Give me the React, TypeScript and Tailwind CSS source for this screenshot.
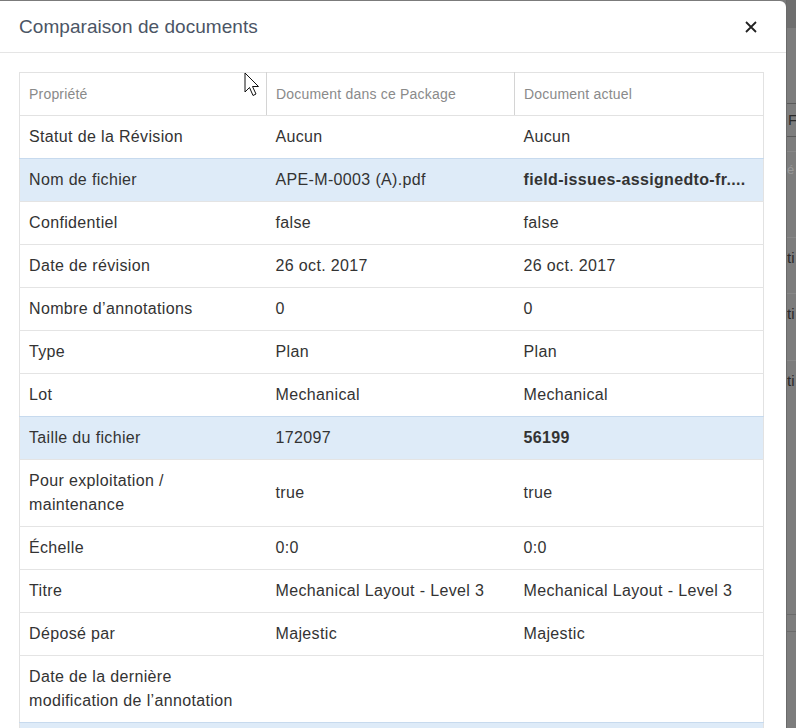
import React from "react";

type Row = { label: React.ReactNode; a: string; b: string; hl?: boolean; bold?: boolean };

const rows: Row[] = [
  { label: "Statut de la Révision", a: "Aucun", b: "Aucun" },
  { label: "Nom de fichier", a: "APE-M-0003 (A).pdf", b: "field-issues-assignedto-fr....", hl: true, bold: true },
  { label: "Confidentiel", a: "false", b: "false" },
  { label: "Date de révision", a: "26 oct. 2017", b: "26 oct. 2017" },
  { label: "Nombre d’annotations", a: "0", b: "0" },
  { label: "Type", a: "Plan", b: "Plan" },
  { label: "Lot", a: "Mechanical", b: "Mechanical" },
  { label: "Taille du fichier", a: "172097", b: "56199", hl: true, bold: true },
  { label: (<>Pour exploitation /<br />maintenance</>), a: "true", b: "true" },
  { label: "Échelle", a: "0:0", b: "0:0" },
  { label: "Titre", a: "Mechanical Layout - Level 3", b: "Mechanical Layout - Level 3" },
  { label: "Déposé par", a: "Majestic", b: "Majestic" },
  { label: (<>Date de la dernière<br />modification de l’annotation</>), a: "", b: "" },
  { label: "\u00a0", a: "", b: "", hl: true },
];

export default function App() {
  return (
    <div
      className="relative w-[796px] h-[728px] overflow-hidden bg-[#7b7b7b] flex"
      style={{ fontFamily: '"Liberation Sans", Arial, sans-serif' }}
    >
      <div className="w-[786px] mt-px bg-white rounded-tr-[6px] shrink-0 flex flex-col">
        <div className="h-[52px] border-b border-[#e5e5e5] flex items-center justify-between pl-[19px] pr-[28px] shrink-0">
          <span className="text-[19px] tracking-[0.05px] text-[#4b5565] pt-[1px]">Comparaison de documents</span>
          <svg width="14" height="14" viewBox="0 0 14 14" className="mt-[1px]">
            <path d="M2 2 L12 12 M12 2 L2 12" stroke="#222" strokeWidth="1.8" />
          </svg>
        </div>
        <div className="pt-[19px] pl-[19px] pr-[23px] overflow-hidden">
          <table className="w-[744px] table-fixed border-collapse border border-[#e2e2e2]">
            <colgroup>
              <col className="w-[247px]" />
              <col className="w-[248px]" />
              <col className="w-[249px]" />
            </colgroup>
            <thead>
              <tr className="h-[43px]">
                <th className="text-left font-normal text-[14px] tracking-[0.2px] text-[#8a8a8a] px-[9px] pt-[1px] border-r border-[#d4d4d4] border-b border-b-[#e2e2e2]">Propriété</th>
                <th className="text-left font-normal text-[14px] tracking-[0.2px] text-[#8a8a8a] px-[9px] pt-[1px] border-r border-[#d4d4d4] border-b border-b-[#e2e2e2]">Document dans ce Package</th>
                <th className="text-left font-normal text-[14px] tracking-[0.2px] text-[#8a8a8a] px-[9px] pt-[1px] border-b border-[#e2e2e2]">Document actuel</th>
              </tr>
            </thead>
            <tbody>
              {rows.map((r, i) => (
                <tr
                  key={i}
                  className={
                    r.hl
                      ? "bg-[#deebf8] border-t border-[#c7daee] text-[16px] tracking-[0.35px] leading-6 text-[#333]"
                      : "border-t border-[#e4e4e4] text-[16px] tracking-[0.35px] leading-6 text-[#333]"
                  }
                >
                  <td className="px-[9px] py-[9px] align-middle">{r.label}</td>
                  <td className="px-[9px] py-[9px] align-middle whitespace-nowrap overflow-hidden">{r.a}</td>
                  <td
                    className={
                      r.bold
                        ? "px-[9px] py-[9px] align-middle whitespace-nowrap overflow-hidden font-bold text-[#333]"
                        : "px-[9px] py-[9px] align-middle whitespace-nowrap overflow-hidden"
                    }
                  >
                    {r.b}
                  </td>
                </tr>
              ))}
            </tbody>
          </table>
        </div>
      </div>

      {/* background page strip */}
      <div className="flex-1 flex flex-col bg-[#7d7d7d] border-l border-[#6a6a6a] text-[15px] text-[#2a2a2a] overflow-hidden">
        <div className="h-[28px] bg-[#6f6f6f]" />
        <div className="h-[75px]" />
        <div className="h-[34px] border-t border-[#5a5a5a] border-b flex items-center pl-[1px]">F</div>
        <div className="h-[14px]" />
        <div className="h-[36px] border-t border-[#888] flex items-center text-[#999] text-[13px]">é</div>
        <div className="h-[50px]" />
        <div className="h-[42px] border-t border-[#888] flex items-center">ti</div>
        <div className="h-[14px]" />
        <div className="h-[42px] border-t border-[#888] flex items-center">ti</div>
        <div className="h-[25px]" />
        <div className="h-[42px] border-t border-[#888] flex items-center">ti</div>
        <div className="h-[212px]" />
        <div className="h-[18px] border-t border-b border-[#6a6a6a]" />
      </div>

      {/* mouse cursor */}
      <svg className="absolute left-[244px] top-[72px]" width="20" height="28" viewBox="0 0 20 28">
        <path d="M1 1 L1 20 L5.5 15.5 L9 23.5 L12 22 L8.5 14.5 L14.5 14.5 Z" fill="#fff" stroke="#111" strokeWidth="1" strokeLinejoin="round" />
      </svg>
    </div>
  );
}
